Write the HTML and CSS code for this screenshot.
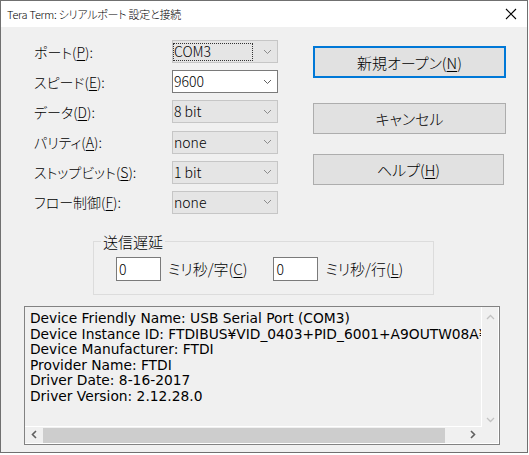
FILE: index.html
```html
<!DOCTYPE html>
<html lang="ja">
<head>
<meta charset="utf-8">
<title>Tera Term: シリアルポート 設定と接続</title>
<link rel="stylesheet" href="styles.css">
</head>
<body>
<div class="window">
  <div class="titlebar">
    <span class="title">Tera Term: シリアルポート 設定と接続</span>
    <svg class="close" width="12" height="12" viewBox="0 0 12 12"><path d="M1 1 L11 11 M11 1 L1 11" stroke="#000" stroke-width="1.1" fill="none"/></svg>
  </div>
  <div class="client">
    <div class="top">
      <div class="form">
        <label class="lbl">ポート(<u>P</u>):</label>
        <div class="combo list"><span class="val focus">COM3</span><svg class="chev" width="9" height="6" viewBox="0 0 9 6"><path d="M1 1 L4.5 4.5 L8 1" stroke="#8a8a8a" fill="none"/></svg></div>
        <label class="lbl">スピード(<u>E</u>):</label>
        <div class="combo edit"><span class="val">9600</span><svg class="chev" width="9" height="6" viewBox="0 0 9 6"><path d="M1 1 L4.5 4.5 L8 1" stroke="#606060" fill="none"/></svg></div>
        <label class="lbl">データ(<u>D</u>):</label>
        <div class="combo list"><span class="val">8 bit</span><svg class="chev" width="9" height="6" viewBox="0 0 9 6"><path d="M1 1 L4.5 4.5 L8 1" stroke="#8a8a8a" fill="none"/></svg></div>
        <label class="lbl">パリティ(<u>A</u>):</label>
        <div class="combo list"><span class="val">none</span><svg class="chev" width="9" height="6" viewBox="0 0 9 6"><path d="M1 1 L4.5 4.5 L8 1" stroke="#8a8a8a" fill="none"/></svg></div>
        <label class="lbl">ストップビット(<u>S</u>):</label>
        <div class="combo list"><span class="val">1 bit</span><svg class="chev" width="9" height="6" viewBox="0 0 9 6"><path d="M1 1 L4.5 4.5 L8 1" stroke="#8a8a8a" fill="none"/></svg></div>
        <label class="lbl">フロー制御(<u>F</u>):</label>
        <div class="combo list"><span class="val">none</span><svg class="chev" width="9" height="6" viewBox="0 0 9 6"><path d="M1 1 L4.5 4.5 L8 1" stroke="#8a8a8a" fill="none"/></svg></div>
      </div>
      <div class="buttons">
        <button class="btn default">新規オープン(<u>N</u>)</button>
        <button class="btn cancel">キャンセル</button>
        <button class="btn help">ヘルプ(<u>H</u>)</button>
      </div>
    </div>
    <fieldset class="group">
      <legend>送信遅延</legend>
      <div class="delay">
        <div class="field">0</div>
        <span class="unit">ミリ秒/字(<u>C</u>)</span>
        <div class="field second">0</div>
        <span class="unit">ミリ秒/行(<u>L</u>)</span>
      </div>
    </fieldset>
    <div class="info">
      <div class="info-text">
        <div>Device Friendly Name: USB Serial Port (COM3)</div>
        <div>Device Instance ID: FTDIBUS¥VID_0403+PID_6001+A9OUTW08A¥0000</div>
        <div>Device Manufacturer: FTDI</div>
        <div>Provider Name: FTDI</div>
        <div>Driver Date: 8-16-2017</div>
        <div>Driver Version: 2.12.28.0</div>
      </div>
      <div class="vscroll">
        <svg width="9" height="6" viewBox="0 0 9 6"><path d="M1 5 L4.5 1.5 L8 5" stroke="#c2c2c2" stroke-width="1.3" fill="none"/></svg>
        <svg width="9" height="6" viewBox="0 0 9 6"><path d="M1 1 L4.5 4.5 L8 1" stroke="#c2c2c2" stroke-width="1.3" fill="none"/></svg>
      </div>
      <div class="hscroll">
        <span class="arrow"><svg width="6" height="9" viewBox="0 0 6 9"><path d="M5 1 L1.5 4.5 L5 8" stroke="#606060" stroke-width="1.6" fill="none"/></svg></span>
        <span class="thumb"></span>
        <span class="track"></span>
        <span class="arrow"><svg width="6" height="9" viewBox="0 0 6 9"><path d="M1 1 L4.5 4.5 L1 8" stroke="#606060" stroke-width="1.6" fill="none"/></svg></span>
      </div>
      <div class="corner"></div>
    </div>
  </div>
</div>
</body>
</html>
```
FILE: styles.css
```css
* { box-sizing: border-box; }
html, body { margin: 0; padding: 0; background: #ffffff; }
body {
  font-family: "Noto Sans CJK JP", "Noto Sans", sans-serif;
  font-feature-settings: "palt";
  font-weight: 300;
  color: #000;
}
u { text-decoration: underline; text-underline-offset: 2px; text-decoration-thickness: 1px; }

.window {
  width: 528px;
  height: 453px;
  border: 1px solid #707070;
  display: flex;
  flex-direction: column;
  background: #f0f0f0;
}
.titlebar {
  height: 26px;
  background: #fff;
  display: flex;
  align-items: center;
  justify-content: space-between;
  padding: 0 10px 0 6px;
  flex: none;
}
.title { font-size: 11px; line-height: 16px; letter-spacing: -0.25px; }
.close { display: block; }

.client { flex: 1; display: flex; flex-direction: column; }

.top { display: flex; padding: 13px 0 0 33px; }
.form {
  display: grid;
  grid-template-columns: 138px 106px;
  grid-auto-rows: 23px;
  row-gap: 7.2px;
  align-items: center;
}
.lbl { font-size: 14px; line-height: 18px; }

.combo {
  height: 23px;
  display: flex;
  align-items: center;
  border: 1px solid #c6c6c6;
  background: #e5e5e5;
  font-size: 14px;
  padding-right: 5px;
}
.combo.edit { background: #fff; border-color: #7a7a7a; }
.val { flex: 1; line-height: 17px; padding-left: 1px; }
.val.focus { outline: 1px dotted #333; outline-offset: -1px; height: 18px; margin-right: 10px; line-height: 17px; }
.chev { flex: none; }

.buttons {
  display: flex;
  flex-direction: column;
  margin-left: 35px;
  padding-top: 6px;
}
.btn {
  width: 193px;
  height: 31px;
  background: #e1e1e1;
  border: 1px solid #adadad;
  font-family: inherit;
  font-feature-settings: "palt";
  font-weight: 300;
  font-size: 15px;
  padding: 0;
  color: #000;
}
.btn.default { border-color: #0078d7; box-shadow: inset 0 0 0 1px #0078d7; height: 32px; }
.btn.cancel { margin-top: 25px; }
.btn.help { margin-top: 20px; width: 191px; }

.group {
  margin: 19px 0 0 92px;
  width: 341px;
  border: 1px solid #dcdcdc;
  padding: 6px 0 13px 22px;
}
.group legend {
  font-size: 15px;
  line-height: 18px;
  padding: 0 2px;
  margin-left: -15px;
}
.delay { display: flex; align-items: center; }
.field {
  width: 45px;
  height: 24px;
  background: #fff;
  border: 1px solid #7a7a7a;
  font-size: 14px;
  line-height: 22px;
  padding-left: 2px;
}
.field.second { margin-left: 26px; }
.unit { font-size: 15px; margin-left: 7px; }

.info {
  margin: 11px 0 0 23px;
  width: 476px;
  height: 139px;
  border: 1px solid #828282;
  box-shadow: inset -1px -1px 0 #fff;
  display: grid;
  grid-template-columns: 457px 16px;
  grid-template-rows: 120px 16px;
}
.info-text {
  border-right: 1px solid #fff;
  border-bottom: 1px solid #fff;
  overflow: hidden;
  white-space: nowrap;
  padding: 4px 0 0 5px;
  font-family: "DejaVu Sans", sans-serif;
  font-feature-settings: normal;
  font-weight: 400;
  font-size: 13.8px;
  line-height: 15.6px;
}
.vscroll {
  display: flex;
  flex-direction: column;
  justify-content: space-between;
  align-items: center;
  padding: 7px 0 4px;
}
.vscroll svg { display: block; }
.hscroll { display: flex; align-items: stretch; }
.hscroll .arrow { width: 18px; display: flex; align-items: center; justify-content: center; }
.hscroll .thumb { width: 402px; background: #cdcdcd; margin-top: 1px; }
.hscroll .track { flex: 1; }
.corner { background: #f0f0f0; }
```
